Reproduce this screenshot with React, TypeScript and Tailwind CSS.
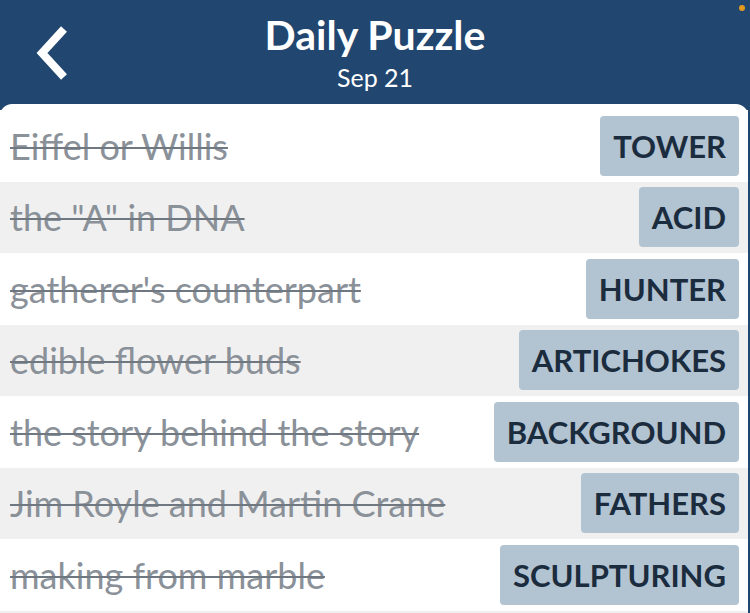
import React from 'react';

const clues = [
  { clue: 'Eiffel or Willis', answer: 'TOWER' },
  { clue: 'the "A" in DNA', answer: 'ACID' },
  { clue: "gatherer's counterpart", answer: 'HUNTER' },
  { clue: 'edible flower buds', answer: 'ARTICHOKES' },
  { clue: 'the story behind the story', answer: 'BACKGROUND' },
  { clue: 'Jim Royle and Martin Crane', answer: 'FATHERS' },
  { clue: 'making from marble', answer: 'SCULPTURING' },
];

export default function App() {
  return (
    <div
      className="w-[750px] h-[613px] overflow-hidden bg-[#21466f] flex flex-col"
      style={{ fontFamily: 'Lato, "Noto Sans", sans-serif' }}
    >
      {/* Header */}
      <div className="relative h-[104px] shrink-0 flex flex-col items-center text-white">
        <button className="absolute left-[30px] top-[23px] w-[46px] h-[60px] flex items-center justify-center">
          <svg width="46" height="60" viewBox="0 0 46 60">
            <polyline
              points="34,6 12,30 34,54"
              fill="none"
              stroke="#fff"
              strokeWidth="8"
              strokeLinecap="butt"
              strokeLinejoin="miter"
            />
          </svg>
        </button>
        <div className="mt-[11px] text-[41px] font-bold leading-[48px]">Daily Puzzle</div>
        <div className="mt-[3px] text-[25px] leading-[30px]">Sep 21</div>
        <span className="absolute right-[5px] top-[5px] w-[6px] h-[6px] rounded-full bg-[#e39b1e]" />
      </div>

      {/* Card */}
      <div className="flex-1 bg-white rounded-t-[12px] mr-[2px] pt-[6px]">
        {clues.map((c, i) => (
          <div
            key={c.answer}
            className={`h-[71.5px] flex items-center justify-between pl-[10px] pr-[9px] ${
              i % 2 === 1 ? 'bg-[#f0f0f0]' : 'bg-white'
            }`}
          >
            <span className="text-[36px] text-[#8a9199] line-through decoration-[1.5px] decoration-[#6f7780]">
              {c.clue}
            </span>
            <span className="h-[60px] flex items-center px-[13px] rounded-[4px] bg-[#b2c3d1] text-[31px] font-bold text-[#1b2c3e]">
              {c.answer}
            </span>
          </div>
        ))}
        <div className="h-[20px] bg-[#f0f0f0]" />
      </div>
    </div>
  );
}
